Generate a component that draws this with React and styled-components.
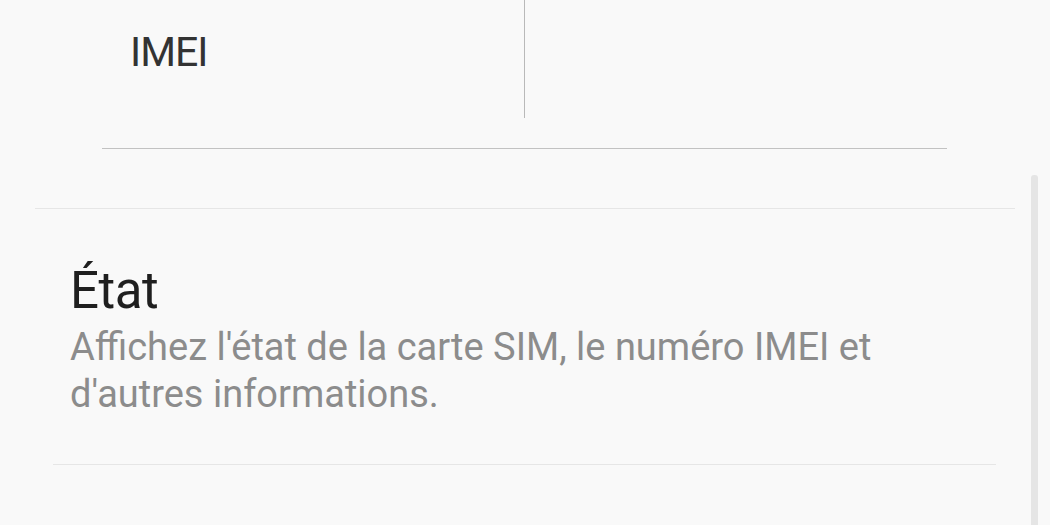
import React from 'react'
import styled, { createGlobalStyle } from 'styled-components'

const GlobalStyle = createGlobalStyle`
  html, body {
    margin: 0;
    padding: 0;
    background: #f9f9f9;
  }
  body {
    font-family: Roboto, "Liberation Sans", sans-serif;
  }
`

const Screen = styled.div`
  position: relative;
  width: 1050px;
  height: 525px;
  overflow: hidden;
  background: #f9f9f9;
  display: flex;
  flex-direction: column;
`

const InfoRow = styled.div`
  display: grid;
  grid-template-columns: 525px 1fr;
  height: 118px;
`

const InfoLabel = styled.div`
  border-right: 1px solid #b9b9b9;
  padding: 28px 0 0 130px;
  font-size: 41px;
  line-height: 48px;
  color: #333333;
  letter-spacing: -1px;
`

const InfoValue = styled.div``

const Rule = styled.div`
  height: 1px;
  background: ${p => p.$color};
  margin: ${p => p.$margin};
`

const Section = styled.div`
  margin: 59px 35px 0 35px;
  border-top: 1px solid #e6e6e6;
`

const Item = styled.div`
  box-sizing: border-box;
  padding: 54px 0 0 35px;
  height: 255px;
`

const Title = styled.div`
  font-size: 51px;
  line-height: 56px;
  color: #1f1f1f;
  letter-spacing: -0.5px;
`

const Summary = styled.div`
  margin-top: 5px;
  font-size: 38px;
  line-height: 47px;
  color: #8c8c8c;
  max-width: 840px;
`

const Scrollbar = styled.div`
  position: absolute;
  top: 175px;
  right: 12px;
  width: 7px;
  bottom: 0;
  border-radius: 3px 3px 0 0;
  background: #e5e5e5;
`

export default function App() {
  return (
    <>
      <GlobalStyle />
      <Screen>
        <InfoRow>
          <InfoLabel>IMEI</InfoLabel>
          <InfoValue />
        </InfoRow>
        <Rule $color="#c2c2c2" $margin="30px 103px 0 102px" />
        <Section>
          <Item>
            <Title>État</Title>
            <Summary>
              Affichez l'état de la carte SIM, le numéro IMEI et d'autres informations.
            </Summary>
          </Item>
          <Rule $color="#e6e6e6" $margin="0 19px 0 18px" />
        </Section>
        <Scrollbar />
      </Screen>
    </>
  )
}
